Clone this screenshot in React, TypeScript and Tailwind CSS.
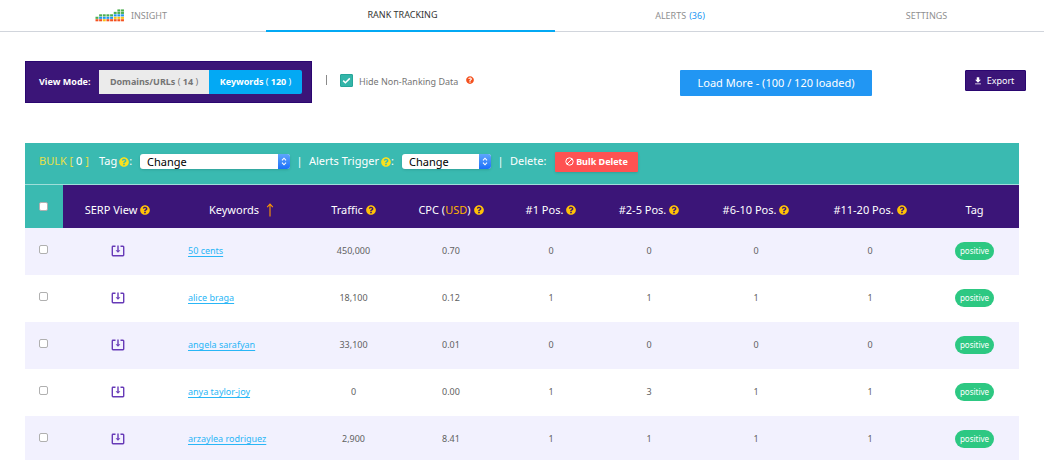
import { useState } from "react";
import type { ReactNode } from "react";
import { FaQuestionCircle } from "react-icons/fa";
import { MdFileDownload } from "react-icons/md";

const rows = [
  { keyword: "50 cents", traffic: "450,000", cpc: "0.70", pos: [0, 0, 0, 0] },
  { keyword: "alice braga", traffic: "18,100", cpc: "0.12", pos: [1, 1, 1, 1] },
  { keyword: "angela sarafyan", traffic: "33,100", cpc: "0.01", pos: [0, 0, 0, 0] },
  { keyword: "anya taylor-joy", traffic: "0", cpc: "0.00", pos: [1, 3, 1, 1] },
  { keyword: "arzaylea rodriguez", traffic: "2,900", cpc: "8.41", pos: [1, 1, 1, 1] },
];

// dot colours of each logo bar, bottom to top
const G = "#4caf50";
const B = "#2196f3";
const Y = "#f9c116";
const R = "#f4511e";
const bars = [
  [R, G],
  [R, B, G],
  [Y, B, G],
  [R, B, G],
  [R, B, G],
  [R, Y, B, G],
  [R, Y, B, G, G],
  [R, Y, B, G, G],
];

const Logo = () => (
  <svg width="30" height="13" viewBox="0 0 30 13" aria-hidden="true">
    {bars.map((bar, i) =>
      bar.map((color, j) => (
        <rect
          key={`${i}-${j}`}
          x={0.5 + i * 3.65}
          y={10.2 - j * 2.45}
          width="2.900"
          height="2.100"
          fill={color}
        />
      ))
    )}
  </svg>
);

const Help = ({ className = "text-[#ffc107]" }: { className?: string }) => (
  <FaQuestionCircle className={`block shrink-0 w-[10px] h-[10px] ${className}`} />
);

const Tick = ({ label }: { label: string }) => (
  <input
    type="checkbox"
    aria-label={label}
    className="block mx-auto appearance-none w-[9px] h-[9px] bg-white border border-[#b0b0b0] rounded-[2px] checked:bg-blue-500"
  />
);

const Picker = ({ label, className }: { label: string; className: string }) => (
  <div className={`relative h-[15px] ${className}`}>
    <select
      aria-label={label}
      className="block appearance-none w-full h-full bg-white text-black text-[11px] leading-[15px] pl-[7px] rounded-[3px] shadow-sm"
    >
      <option>Change</option>
    </select>
    <span className="absolute right-0 top-0 w-3 h-full bg-linear-to-b from-[#5ea5fb] to-[#1a6ffa] rounded-r-[3px] flex items-center justify-center pointer-events-none">
      <svg width="6" height="9" viewBox="0 0 6 9" fill="none" stroke="white" strokeWidth="1.1">
        <path d="M1 3.3 3 1.2l2 2.1M1 5.7l2 2.1 2-2.1" />
      </svg>
    </span>
  </div>
);

const Th = ({ children, help = true }: { children: ReactNode; help?: boolean }) => (
  <th className="font-normal text-center pt-2">
    <span className="inline-flex items-center gap-[3px] whitespace-nowrap">
      {children}
      {help && <Help />}
    </span>
  </th>
);

const App = () => {
  const [hide, setHide] = useState(true);

  return (
    <div className="min-h-[460px] bg-white text-[11px] font-['Noto_Sans',sans-serif]">
      <nav className="grid grid-cols-[266fr_289fr_250fr_239fr] h-8 text-[9px] text-[#8f8f8f]">
        <a href="#" className="flex items-center justify-center gap-[6px] border-b border-gray-300 pr-1">
          <Logo />
          INSIGHT
        </a>
        <a href="#" className="flex items-center justify-center border-b-2 border-[#03a9f4] text-[#333333] pr-4">
          RANK TRACKING
        </a>
        <a href="#" className="flex items-center justify-center gap-[3px] border-b border-gray-300">
          ALERTS <span className="text-[#2196f3]">(36)</span>
        </a>
        <a href="#" className="flex items-center justify-center border-b border-gray-300 pl-1">
          SETTINGS
        </a>
      </nav>

      <div className="flex items-start pl-[25px] pr-[18px] pt-[29px]">
        <div className="flex items-center h-[42px] w-[287px] bg-[#3b1578] border border-[#2a0670] pl-[13px] text-[9px] font-bold text-white">
          <span className="w-[60px] whitespace-nowrap">View Mode:</span>
          <button className="h-6 w-[110px] bg-[#ebebeb] text-[#757575] whitespace-nowrap">
            Domains/URLs <span className="font-normal">(</span> 14 <span className="font-normal">)</span>
          </button>
          <button className="h-6 w-[93px] bg-[#03a9f4] rounded-r-[2px] whitespace-nowrap">
            Keywords <span className="font-normal">(</span> 120 <span className="font-normal">)</span>
          </button>
        </div>
        <span className="ml-[14px] mt-[14px] w-px h-[10px] bg-[#8a8a8a]" />
        <label className="flex items-start ml-[13px] mt-[13px] text-[9px] leading-4 text-[#757575] whitespace-nowrap">
          <span className="relative block w-[13px] h-[13px] mr-[6px]">
            <input
              type="checkbox"
              checked={hide}
              onChange={() => setHide(!hide)}
              className="block appearance-none w-[13px] h-[13px] border border-[#26a69a] rounded-[1px] checked:bg-[#33b5a9]"
            />
            {hide && (
              <svg viewBox="0 0 13 13" className="absolute inset-0 pointer-events-none" fill="none" stroke="white" strokeWidth="1.5">
                <path d="m3.2 6.6 2.2 2.2 4.4-4.4" />
              </svg>
            )}
          </span>
          Hide Non-Ranking Data
        </label>
        <FaQuestionCircle className="w-2 h-2 ml-2 mt-[15px] text-[#f4511e]" />
        <button className="ml-auto mt-[9px] w-[192px] h-[26px] bg-[#2196f3] rounded-[1px] text-white text-[11px]">
          Load More - (100 / 120 loaded)
        </button>
        <button className="flex items-center justify-center gap-1 ml-[93px] mt-[9px] w-[61px] h-[21px] bg-[#3b1578] border border-[#2a0670] rounded-[1px] pr-1 text-white text-[9px]">
          <MdFileDownload className="w-[10px] h-[10px]" />
          Export
        </button>
      </div>

      <main className="mx-[25px] mt-10">
        <div className="flex items-center h-[41px] bg-[#3abab1] pl-[14px] pb-1 text-[11px] text-white whitespace-nowrap">
          <span className="w-[60px] text-[#e6e04a]">
            BULK [ <span className="text-white">0</span> ]
          </span>
          <span className="flex items-center w-[41px]">
            Tag <Help className="text-[#f9e11e] ml-[2px]" />:
          </span>
          <Picker label="Tag" className="w-[150px]" />
          <span className="w-[19px] text-center">|</span>
          <span className="flex items-center w-[93px]">
            Alerts Trigger <Help className="text-[#f9e11e] ml-[2px]" />:
          </span>
          <Picker label="Alerts Trigger" className="w-[89px]" />
          <span className="w-[19px] text-center">|</span>
          <span className="w-[45px]">Delete:</span>
          <button className="flex items-center justify-center gap-[2px] w-[83px] h-5 bg-[#ff5252] rounded-[1px] shadow-sm text-[9px] font-bold">
            <svg width="9" height="9" viewBox="0 0 9 9" fill="none" stroke="white" strokeWidth="1">
              <circle cx="4.5" cy="4.5" r="3.7" />
              <path d="m1.900 7.100 5.200-5.200" />
            </svg>
            Bulk Delete
          </button>
        </div>

        <table className="table-fixed w-full border-collapse text-center">
          <colgroup>
            <col className="w-[38px]" />
            <col className="w-[109px]" />
            <col className="w-[139px]" />
            <col className="w-[85px]" />
            <col className="w-[110px]" />
            <col className="w-[90px]" />
            <col className="w-[106px]" />
            <col className="w-[108px]" />
            <col className="w-[120px]" />
            <col className="w-[89px]" />
          </colgroup>
          <thead>
            <tr className="h-[43px] bg-[#3b1578] border-t border-t-[#9fded9] text-[11px] text-white">
              <th className="bg-[#3abab1] pr-[2px]">
                <Tick label="Select all" />
              </th>
              <Th>SERP View</Th>
              <Th help={false}>
                Keywords
                <svg width="8" height="14" viewBox="0 0 8 14" className="ml-1" fill="none" stroke="#ff9800" strokeWidth="1.1">
                  <path d="M4 13.5V1M1.2 4.2 4 1l2.800 3.200" />
                </svg>
              </Th>
              <Th>Traffic</Th>
              <Th>
                <span>
                  CPC (<span className="text-[#ffb300]">USD</span>)
                </span>
              </Th>
              <Th>#1 Pos.</Th>
              <Th>#2-5 Pos.</Th>
              <Th>#6-10 Pos.</Th>
              <Th>#11-20 Pos.</Th>
              <Th help={false}>Tag</Th>
            </tr>
          </thead>
          <tbody className="text-[9px] text-[#616161]">
            {rows.map((row) => (
              <tr key={row.keyword} className="h-[47px] odd:bg-[#f2f1fe]">
                <td className="pb-1 pr-[2px]">
                  <Tick label={`Select ${row.keyword}`} />
                </td>
                <td>
                  <button aria-label="SERP view" className="block mx-auto">
                    <svg width="14" height="12" viewBox="0 0 14 12" fill="none" stroke="#673ab7" strokeWidth="1.4">
                      <path d="M4.500 1.200H2a.7.7 0 0 0-.7.700v8.200c0 .4.300.700.700.700h10c.4 0 .7-.3.700-.700V1.900a.7.7 0 0 0-.7-.7H9.500M7 .5v5" />
                      <path d="M4.600 5.300h4.800L7 7.800z" fill="#673ab7" stroke="none" />
                    </svg>
                  </button>
                </td>
                <td className="text-left pl-4">
                  <a href="#" className="text-[#29b6f6] underline underline-offset-2">
                    {row.keyword}
                  </a>
                </td>
                <td>{row.traffic}</td>
                <td>{row.cpc}</td>
                {row.pos.map((n, i) => (
                  <td key={i}>{n}</td>
                ))}
                <td>
                  <span className="inline-block h-[18px] leading-[18px] px-[5px] bg-[#2dc882] rounded-full text-white text-[8px]">
                    positive
                  </span>
                </td>
              </tr>
            ))}
          </tbody>
        </table>
      </main>
    </div>
  );
};

export default App;
